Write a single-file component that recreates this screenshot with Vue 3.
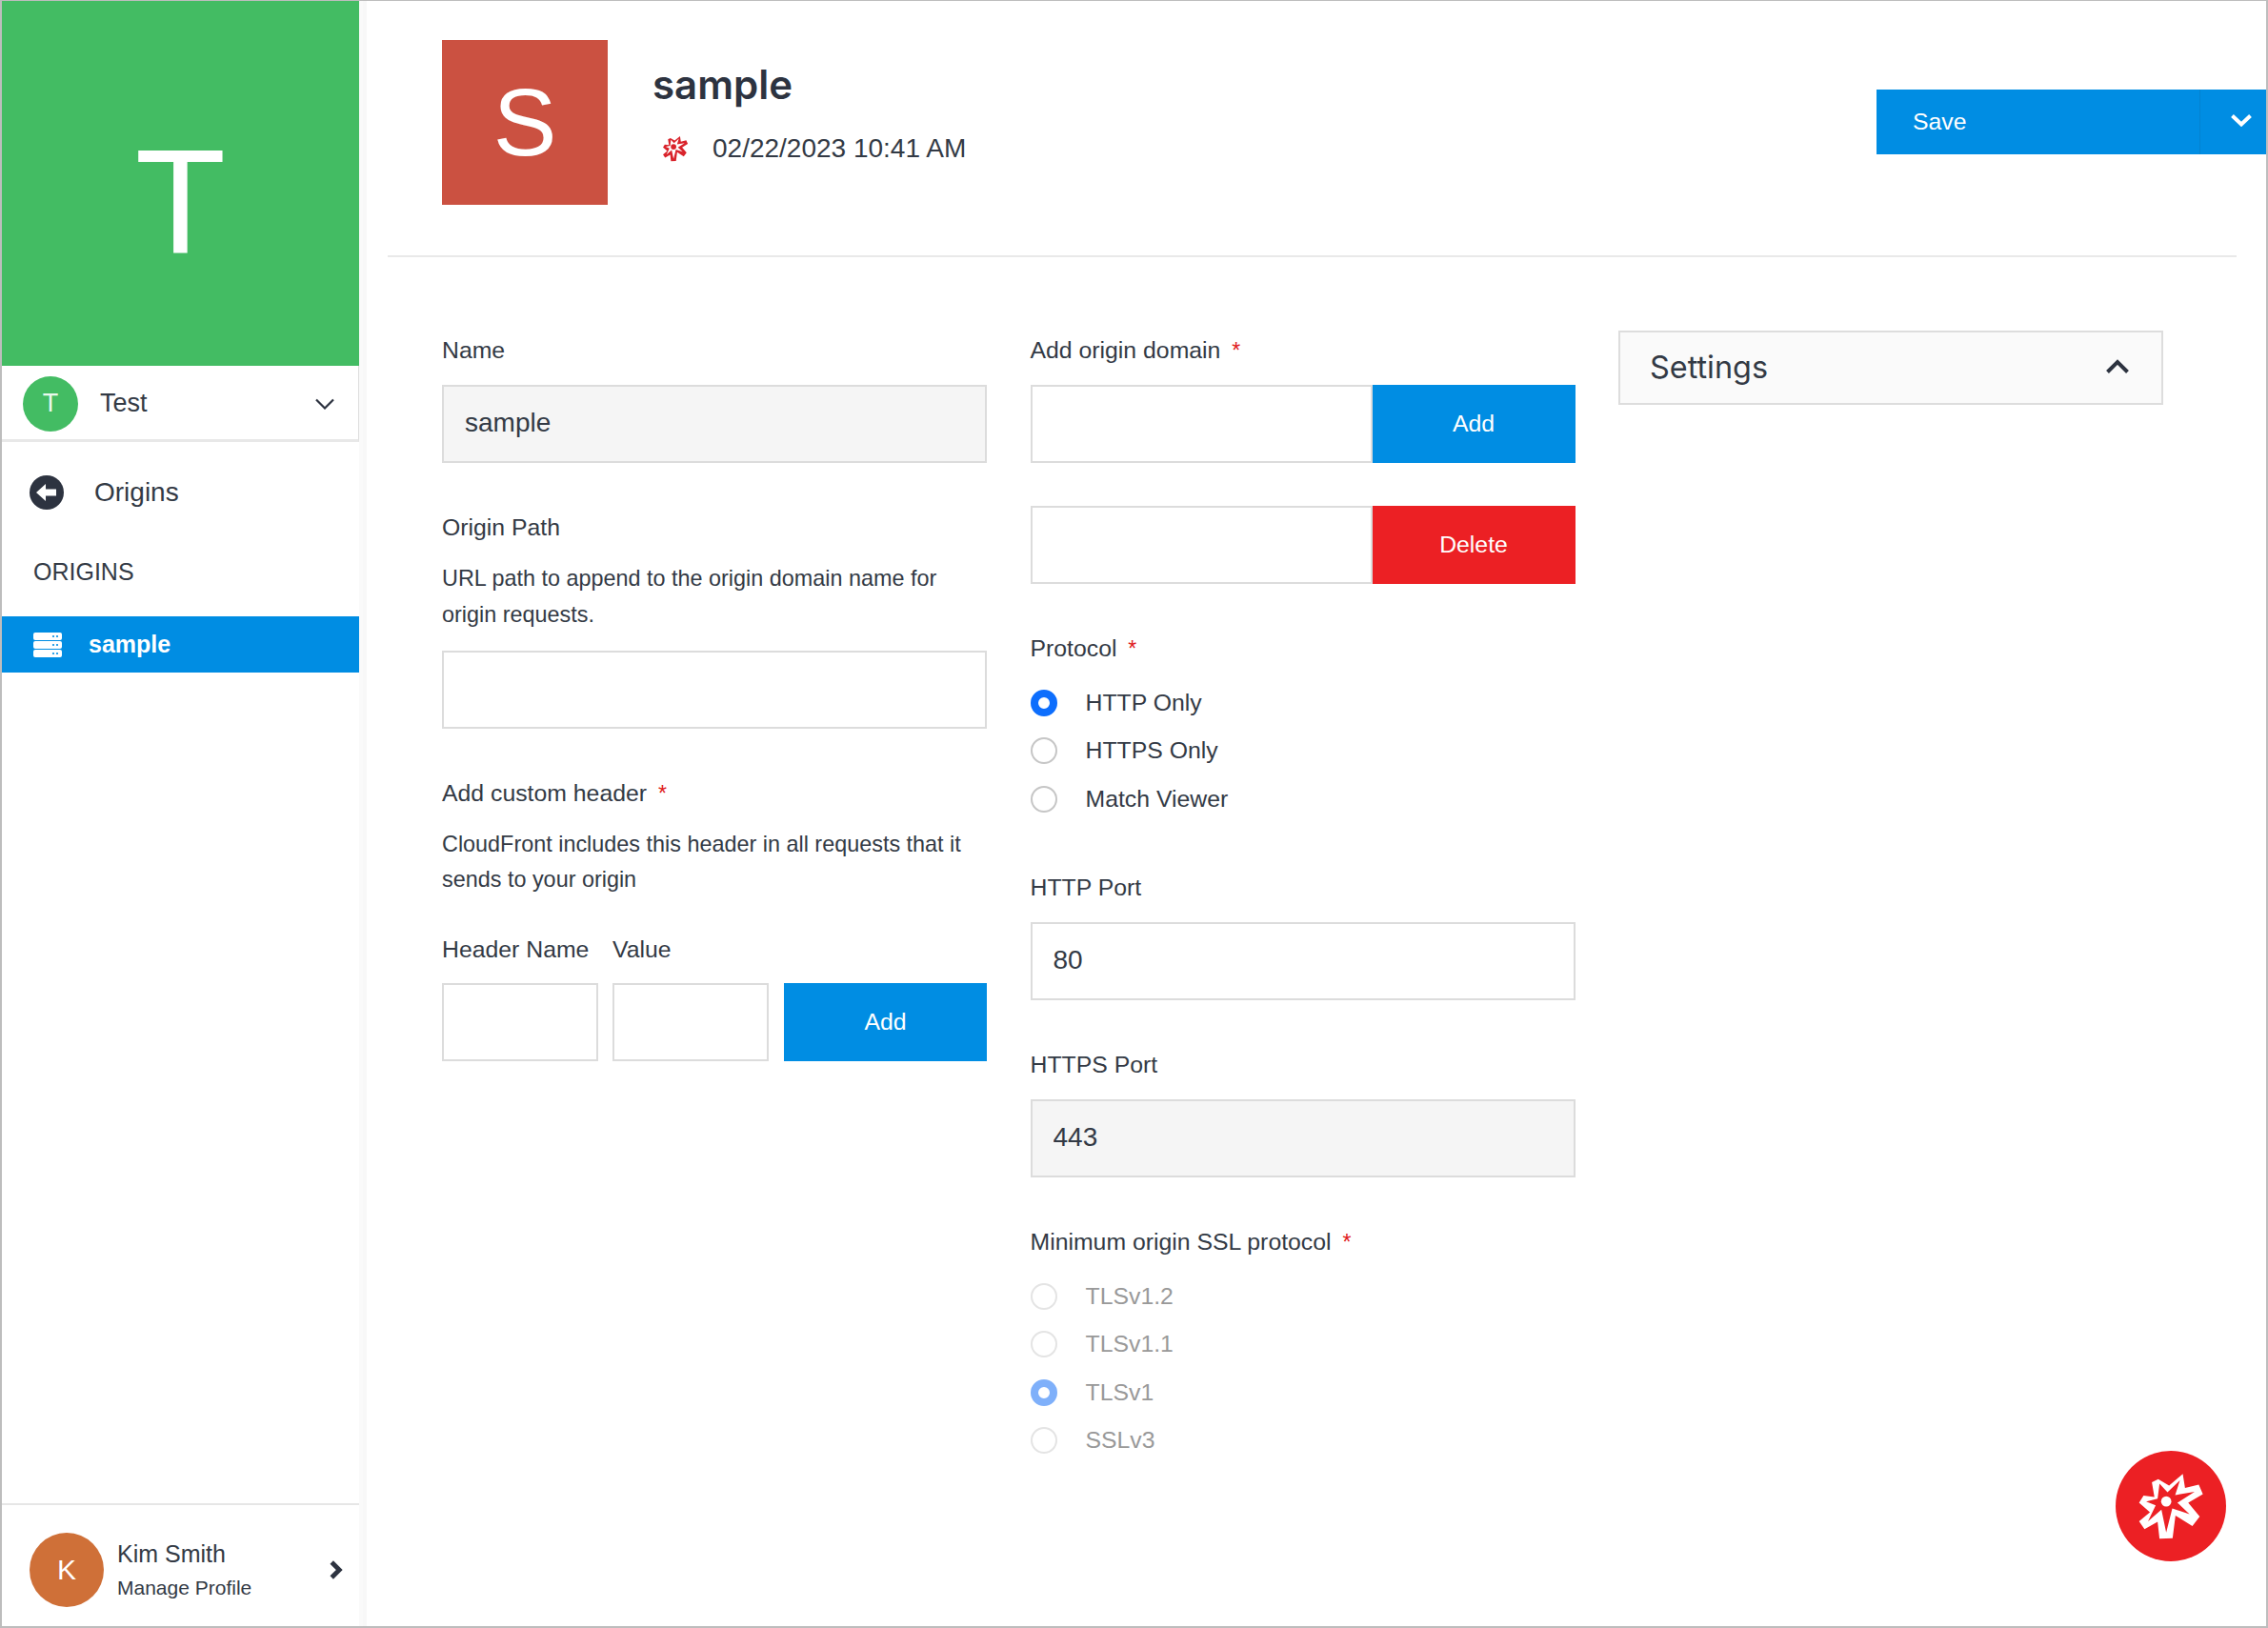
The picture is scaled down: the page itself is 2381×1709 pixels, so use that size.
<template>
  <div class="page">
    <aside class="sidebar">
      <div class="brand-tile">T</div>
      <div class="tenant">
        <span class="tenant-avatar">T</span>
        <span class="tenant-name">Test</span>
        <svg class="tenant-caret" viewBox="0 0 20 12"><path d="M1 1.500l9 9 9-9" /></svg>
      </div>
      <div class="back-link">
        <svg class="back-icon" viewBox="0 0 36 36">
          <circle cx="18" cy="18" r="18" fill="#2d3340" />
          <path d="M7 18l10-9v5.500h11v7H17V27z" fill="#fff" />
        </svg>
        <span>Origins</span>
      </div>
      <div class="section-title">ORIGINS</div>
      <div class="nav-item">
        <svg class="nav-icon" viewBox="0 0 30 26">
          <g v-for="y in [0, 9, 18]" :key="y">
            <rect x="0" :y="y" width="30" height="8" rx="2" fill="#fff" />
            <circle cx="21" :cy="y + 4" r="1.100" fill="#008de3" />
            <circle cx="25" :cy="y + 4" r="1.100" fill="#008de3" />
          </g>
        </svg>
        <span>sample</span>
      </div>
      <div class="profile">
        <span class="profile-avatar">K</span>
        <div class="profile-text">
          <div class="profile-name">Kim Smith</div>
          <div class="profile-link">Manage Profile</div>
        </div>
        <svg class="profile-arrow" viewBox="0 0 14 20"><path d="M3 2.500l7.500 7.500L3 17.500" /></svg>
      </div>
    </aside>

    <main class="main">
      <header class="header">
        <div class="item-tile">S</div>
        <div class="item-info">
          <h1 class="item-title">sample</h1>
          <div class="item-date">
            <svg class="burst-small" viewBox="190 135 215 215">
              <path :d="burstOuter" fill="#d9232b" />
              <path :d="burstInner" fill="#fff" />
              <circle cx="283" cy="228" r="22" fill="#d9232b" />
            </svg>
            <span>02/22/2023 10:41 AM</span>
          </div>
        </div>
        <div class="save-btn">
          <span class="save-label">Save</span>
          <span class="save-caret">
            <svg viewBox="0 0 24 14"><path d="M2.500 2.500l9.500 9 9.500-9" /></svg>
          </span>
        </div>
      </header>
      <div class="divider"></div>

      <div class="form">
        <div class="column">
          <div class="field">
            <label class="label">Name</label>
            <input class="input readonly" value="sample" readonly />
          </div>
          <div class="field origin-path">
            <label class="label">Origin Path</label>
            <p class="hint">URL path to append to the origin domain name for origin requests.</p>
            <input class="input" />
          </div>
          <div class="field">
            <label class="label">Add custom header <i class="req">*</i></label>
            <p class="hint">CloudFront includes this header in all requests that it sends to your origin</p>
            <div class="header-row">
              <div class="header-col">
                <label class="label small-gap">Header Name</label>
                <input class="input" />
              </div>
              <div class="header-col">
                <label class="label small-gap">Value</label>
                <input class="input" />
              </div>
              <button class="btn blue header-add">Add</button>
            </div>
          </div>
        </div>

        <div class="column">
          <div class="field">
            <label class="label">Add origin domain <i class="req">*</i></label>
            <div class="input-btn">
              <input class="input" />
              <button class="btn blue">Add</button>
            </div>
            <div class="input-btn second">
              <input class="input" />
              <button class="btn red">Delete</button>
            </div>
          </div>
          <div class="field">
            <label class="label radio-label">Protocol <i class="req">*</i></label>
            <div v-for="p in protocols" :key="p" class="radio-row">
              <span class="radio" :class="{ checked: p === 'HTTP Only' }"></span>
              <span>{{ p }}</span>
            </div>
          </div>
          <div class="field">
            <label class="label">HTTP Port</label>
            <input class="input" value="80" />
          </div>
          <div class="field">
            <label class="label">HTTPS Port</label>
            <input class="input readonly" value="443" readonly />
          </div>
          <div class="field">
            <label class="label radio-label">Minimum origin SSL protocol <i class="req">*</i></label>
            <div v-for="s in sslProtocols" :key="s" class="radio-row disabled">
              <span class="radio" :class="{ checked: s === 'TLSv1' }"></span>
              <span>{{ s }}</span>
            </div>
          </div>
        </div>

        <div class="column-side">
          <div class="settings">
            <span>Settings</span>
            <svg viewBox="0 0 26 16"><path d="M2.500 13.500L13 3l10.500 10.500" /></svg>
          </div>
        </div>
      </div>

      <div class="fab">
        <svg viewBox="190 135 215 215">
          <path :d="burstOuter" fill="#fff" />
          <path :d="burstInner" fill="#ec2024" />
          <circle cx="283" cy="228" r="16" fill="#fff" />
        </svg>
      </div>
    </main>
  </div>
</template>

<script setup>
const protocols = ['HTTP Only', 'HTTPS Only', 'Match Viewer']
const sslProtocols = ['TLSv1.2', 'TLSv1.1', 'TLSv1', 'SSLv3']

// logo shape, traced from the floating button
const burstOuter =
  'M238 168L258 158L292 178L335 142L342 186L385 175L398 205L352 232L388 275L365 305L312 272L303 343L262 345L256 292L215 315L198 290L232 262L198 232L212 210L246 214Z'
const burstInner =
  'M262 172L287 199L326 162L311 208L372 198L318 232L356 268L302 250L283 325L268 254L226 290L250 240L220 228L256 219Z'
</script>

<style>
html,
body {
  margin: 0;
  background: #fff;
}
</style>

<style scoped>
.page {
  position: relative;
  display: flex;
  box-sizing: border-box;
  width: 2381px;
  height: 1709px;
  border: 2px solid #bdbdbd;
  border-top-width: 1px;
  background: #fff;
  font-family: "Liberation Sans", Arial, sans-serif;
  color: #333a45;
  overflow: hidden;
}

.sidebar {
  display: flex;
  flex-direction: column;
  flex: 0 0 375px;
  background: #fff;
  box-shadow: 4px 0 0 #fafafa, 8px 0 0 #f8f8f8;
}

.brand-tile {
  display: flex;
  align-items: center;
  justify-content: center;
  box-sizing: border-box;
  height: 383px;
  padding-top: 40px;
  background: #43bc63;
  color: #fff;
  font-size: 156px;
}

.tenant {
  display: flex;
  align-items: center;
  box-sizing: border-box;
  height: 80px;
  padding: 2px 25px 0 22px;
  border-bottom: 3px solid #e8e8e8;
  border-right: 1px solid #ddd;
}

.tenant-avatar {
  display: flex;
  align-items: center;
  justify-content: center;
  width: 58px;
  height: 58px;
  border-radius: 50%;
  background: #43bc63;
  color: #e8f8ec;
  font-size: 27px;
}

.tenant-name {
  flex: 1;
  margin-left: 23px;
  font-size: 27px;
}

.tenant-caret {
  width: 20px;
  height: 12px;
  fill: none;
  stroke: #2d3340;
  stroke-width: 2.200;
}

.back-link {
  display: flex;
  align-items: center;
  gap: 32px;
  box-sizing: border-box;
  height: 102px;
  padding: 3px 0 0 29px;
  font-size: 28px;
}

.back-icon {
  width: 36px;
  height: 36px;
}

.section-title {
  display: flex;
  align-items: center;
  height: 68px;
  margin-bottom: 13px;
  padding-left: 33px;
  font-size: 25px;
}

.nav-item {
  display: flex;
  align-items: center;
  gap: 28px;
  height: 59px;
  padding-left: 33px;
  background: #008de3;
  color: #fff;
  font-size: 25px;
  font-weight: 700;
}

.nav-icon {
  width: 30px;
  height: 26px;
}

.profile {
  display: flex;
  align-items: center;
  box-sizing: border-box;
  height: 129px;
  margin-top: auto;
  padding: 8px 17px 0 29px;
  border-top: 2px solid #e6e6e6;
}

.profile-avatar {
  display: flex;
  align-items: center;
  justify-content: center;
  width: 78px;
  height: 78px;
  border-radius: 50%;
  background: #cf7038;
  color: #fff;
  font-size: 30px;
}

.profile-text {
  flex: 1;
  margin-left: 14px;
}

.profile-name {
  font-size: 25px;
  line-height: 34px;
}

.profile-link {
  margin-top: 4px;
  font-size: 21px;
  line-height: 30px;
}

.profile-arrow {
  width: 15px;
  height: 22px;
  fill: none;
  stroke: #2d3340;
  stroke-width: 4.500;
}

.main {
  position: relative;
  flex: 1;
  min-width: 0;
}

.header {
  display: flex;
  align-items: flex-start;
  box-sizing: border-box;
  height: 267px;
  padding: 41px 0 0 87px;
}

.item-tile {
  display: flex;
  align-items: center;
  justify-content: center;
  flex: 0 0 174px;
  height: 173px;
  background: #cb5141;
  color: #fff;
  font-size: 100px;
}

.item-info {
  margin: 25px 0 0 47px;
}

.item-title {
  margin: 0;
  font-family: Inter, "Liberation Sans", sans-serif;
  font-size: 42px;
  font-weight: 600;
  line-height: 44px;
  color: #2d3340;
}

.item-date {
  display: flex;
  align-items: center;
  gap: 25px;
  height: 40px;
  margin-top: 25px;
  padding-left: 10px;
  font-size: 28px;
}

.burst-small {
  width: 28px;
  height: 28px;
}

.save-btn {
  display: flex;
  height: 68px;
  margin: 52px 0 0 auto;
  background: #008de3;
  color: #fff;
  font-size: 24.800px;
}

.save-label {
  display: flex;
  align-items: center;
  box-sizing: border-box;
  width: 339px;
  padding-left: 38px;
}

.save-caret {
  display: flex;
  align-items: center;
  justify-content: flex-end;
  box-sizing: border-box;
  width: 70px;
  padding-right: 14px;
  border-left: 1px solid #0483d0;
}

.save-caret svg {
  width: 24px;
  height: 14px;
  margin-top: -4px;
  fill: none;
  stroke: #fff;
  stroke-width: 4;
}

.divider {
  height: 2px;
  margin: 0 31px 0 30px;
  background: #e9e9e9;
}

.form {
  display: flex;
  gap: 45.500px;
  padding: 77px 0 0 87px;
}

.column {
  flex: 0 0 572px;
  padding-top: 5px;
}

.column-side {
  flex: 0 0 572px;
}

.field {
  margin-bottom: 52px;
}

.field.origin-path {
  margin-bottom: 51.500px;
}

.label {
  display: block;
  height: 32px;
  margin-bottom: 20px;
  font-size: 24.800px;
  line-height: 32px;
}

.radio-label {
  margin-bottom: 16px;
}

.req {
  margin-left: 5px;
  color: #e02020;
  font-size: 23px;
  font-style: normal;
}

.hint {
  margin: -1px 0 19px;
  font-size: 23.400px;
  line-height: 37.500px;
}

.input {
  display: block;
  box-sizing: border-box;
  width: 100%;
  height: 82px;
  padding: 0 22px 2px;
  border: 2px solid #dcdcdc;
  border-radius: 0;
  outline: none;
  background: #fff;
  color: #333a45;
  font-family: "Liberation Sans", Arial, sans-serif;
  font-size: 28px;
}

.input.readonly {
  background: #f5f5f5;
}

.btn {
  border: 0;
  color: #fff;
  font-family: "Liberation Sans", Arial, sans-serif;
  font-size: 24.800px;
}

.btn.blue {
  background: #008de3;
}

.btn.red {
  background: #ec2024;
}

.header-row {
  display: flex;
  align-items: flex-end;
  gap: 15px;
  margin-top: 38px;
}

.header-col {
  flex: 0 0 164px;
}

.small-gap {
  margin-bottom: 19px;
  white-space: nowrap;
}

.header-add {
  flex: 1;
  height: 82px;
  margin-left: 1px;
}

.input-btn {
  display: flex;
  height: 82px;
}

.input-btn.second {
  margin-top: 45px;
}

.input-btn .input {
  flex: 1;
  min-width: 0;
}

.input-btn .btn {
  flex: 0 0 213px;
}

.radio-row {
  display: flex;
  align-items: center;
  gap: 30px;
  height: 50.300px;
  font-size: 24.800px;
}

.radio {
  box-sizing: border-box;
  width: 28px;
  height: 28px;
  border: 2px solid #c6c6c6;
  border-radius: 50%;
  background: #fff;
}

.radio.checked {
  border: 8px solid #0d6efd;
}

.radio-row.disabled {
  color: #999;
}

.radio-row.disabled .radio {
  border-color: #e4e4e4;
}

.radio-row.disabled .radio.checked {
  border-color: #7fb0fa;
}

.settings {
  display: flex;
  align-items: center;
  justify-content: space-between;
  box-sizing: border-box;
  height: 78px;
  padding: 0 33px 2px 31px;
  border: 2px solid #ddd;
  background: #fafafa;
  font-family: Inter, "Liberation Sans", sans-serif;
  font-size: 32.400px;
}

.settings svg {
  width: 26px;
  height: 16px;
  fill: none;
  stroke: #2d3340;
  stroke-width: 4;
}

.fab {
  position: absolute;
  right: 42px;
  bottom: 68px;
  display: flex;
  align-items: center;
  justify-content: center;
  width: 116px;
  height: 116px;
  border-radius: 50%;
  background: #ec2024;
}

.fab svg {
  width: 72px;
  height: 72px;
}
</style>
